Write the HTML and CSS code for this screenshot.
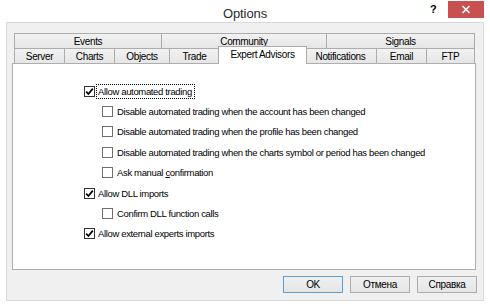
FILE: index.html
```html
<!DOCTYPE html>
<html>

<head>
    <title>Options</title>
    <link rel="stylesheet" href="styles.css">
</head>

<body>
    <div class="window">
        <div class="titlebar">
            <span class="title">Options</span>
            <span class="help">?</span>
            <span class="close">
                <svg width="10" height="9" viewBox="0 0 10 9">
                    <path d="M1.5 1 L8.5 8 M8.5 1 L1.5 8" stroke="#fff" stroke-width="1.6" fill="none" />
                </svg>
            </span>
        </div>

        <div class="client">
            <div class="tabs">
                <div class="tab-row">
                    <div class="tab w-events">Events</div>
                    <div class="tab w-community">Community</div>
                    <div class="tab w-signals">Signals</div>
                </div>
                <div class="tab-row">
                    <div class="tab w-server">Server</div>
                    <div class="tab w-charts">Charts</div>
                    <div class="tab w-objects">Objects</div>
                    <div class="tab w-trade">Trade</div>
                    <div class="tab w-expert selected">Expert Advisors</div>
                    <div class="tab w-notif">Notifications</div>
                    <div class="tab w-email">Email</div>
                    <div class="tab w-ftp">FTP</div>
                </div>
            </div>

            <div class="panel">
                <div class="row">
                    <span class="box checked"><svg width="9" height="9" viewBox="0 0 9 9"><path d="M1.2 4.6 L3.4 7 L7.8 1.6" stroke="#000" stroke-width="1.7" fill="none" /></svg></span>
                    <span class="label focus">Allow automated trading</span>
                </div>
                <div class="row sub">
                    <span class="box"></span>
                    <span class="label">Disable automated trading when the account has been changed</span>
                </div>
                <div class="row sub">
                    <span class="box"></span>
                    <span class="label">Disable automated trading when the profile has been changed</span>
                </div>
                <div class="row sub">
                    <span class="box"></span>
                    <span class="label">Disable automated trading when the charts symbol or period has been changed</span>
                </div>
                <div class="row sub">
                    <span class="box"></span>
                    <span class="label">Ask manual <u>c</u>onfirmation</span>
                </div>
                <div class="row">
                    <span class="box checked"><svg width="9" height="9" viewBox="0 0 9 9"><path d="M1.2 4.6 L3.4 7 L7.8 1.6" stroke="#000" stroke-width="1.7" fill="none" /></svg></span>
                    <span class="label">Allow DLL imports</span>
                </div>
                <div class="row sub">
                    <span class="box"></span>
                    <span class="label">Confirm DLL function calls</span>
                </div>
                <div class="row">
                    <span class="box checked"><svg width="9" height="9" viewBox="0 0 9 9"><path d="M1.2 4.6 L3.4 7 L7.8 1.6" stroke="#000" stroke-width="1.7" fill="none" /></svg></span>
                    <span class="label">Allow external experts imports</span>
                </div>
            </div>

            <div class="buttons">
                <div class="button default">OK</div>
                <div class="button">Отмена</div>
                <div class="button">Справка</div>
            </div>
        </div>
    </div>
</body>

</html>
```

FILE: styles.css
```css
body {
    margin: 0;
    background-color: #fff;
    font-family: "Liberation Sans", Arial, sans-serif;
    font-size: 9.5px;
    letter-spacing: -0.35px;
    color: #000;
}

.window {
    width: 490px;
    height: 307px;
    box-sizing: border-box;
    background-color: #fff;
}

.titlebar {
    position: relative;
    height: 22px;
    display: flex;
    align-items: center;
    justify-content: center;
}

.title {
    font-size: 13px;
    letter-spacing: -0.1px;
    color: #2b2b2b;
    margin-top: 4px;
}

.help {
    position: absolute;
    left: 430px;
    top: 3px;
    font-size: 11px;
    font-weight: bold;
    letter-spacing: 0;
}

.close {
    position: absolute;
    left: 448px;
    top: 1px;
    width: 36px;
    height: 17px;
    background-color: #c75050;
    display: flex;
    align-items: center;
    justify-content: center;
}

.client {
    margin: 0 6px;
    height: 279px;
    box-sizing: border-box;
    border: 1px solid #dadada;
    background-color: #f0f0f0;
    padding: 10px 7px 0 5px;
}

.tabs {
    margin: 0 1px 0 2px;
}

.tab-row {
    display: flex;
    height: 15px;
}

.tab {
    box-sizing: border-box;
    height: 15px;
    border: 1px solid #acacac;
    border-left: none;
    border-bottom: none;
    background: linear-gradient(#f2f2f2, #e6e6e6);
    display: flex;
    align-items: center;
    justify-content: center;
    padding-top: 1px;
    font-size: 10px;
}

.tab:first-child {
    border-left: 1px solid #acacac;
}

.w-events { width: 148px; }
.w-community { width: 165px; }
.w-signals { width: 148px; }
.w-server { width: 51px; }
.w-charts { width: 50px; }
.w-objects { width: 55px; }
.w-trade { width: 50px; }
.w-expert { width: 85px; }
.w-notif { width: 72px; }
.w-email { width: 50px; }
.w-ftp { width: 48px; }

.tab.selected {
    position: relative;
    z-index: 1;
    width: 89px;
    height: 18px;
    margin: -2px -2px -1px -2px;
    border-left: 1px solid #acacac;
    background: #fff;
    padding-top: 0;
    padding-bottom: 2px;
}

.panel {
    height: 207px;
    box-sizing: border-box;
    border: 1px solid #adadad;
    background-color: #fff;
    padding: 17px 0 0 71px;
}

.row {
    height: 20.4px;
    display: flex;
    align-items: center;
}

.row.sub {
    padding-left: 18px;
}

.box {
    width: 11px;
    height: 11px;
    box-sizing: border-box;
    border: 1px solid #333;
    background-color: #fff;
    display: flex;
    align-items: center;
    justify-content: center;
    margin-right: 1px;
}

.row.sub .box {
    border-color: #707070;
    margin-right: 2px;
}

.label {
    padding: 1px 2px 1px 1px;
    border: 1px solid transparent;
}

.label.focus {
    border: 1px dotted #000;
}

.label u {
    text-decoration-thickness: 1px;
    text-underline-offset: 1px;
}

.buttons {
    display: flex;
    justify-content: flex-end;
    gap: 7px;
    margin-top: 6px;
    margin-right: -1px;
}

.button {
    width: 60px;
    height: 17px;
    box-sizing: border-box;
    border: 1px solid #acacac;
    background: linear-gradient(#f0f0f0, #e5e5e5);
    display: flex;
    align-items: center;
    justify-content: center;
    font-size: 10px;
}

.button.default {
    border-color: #5b9fd9;
}
```
